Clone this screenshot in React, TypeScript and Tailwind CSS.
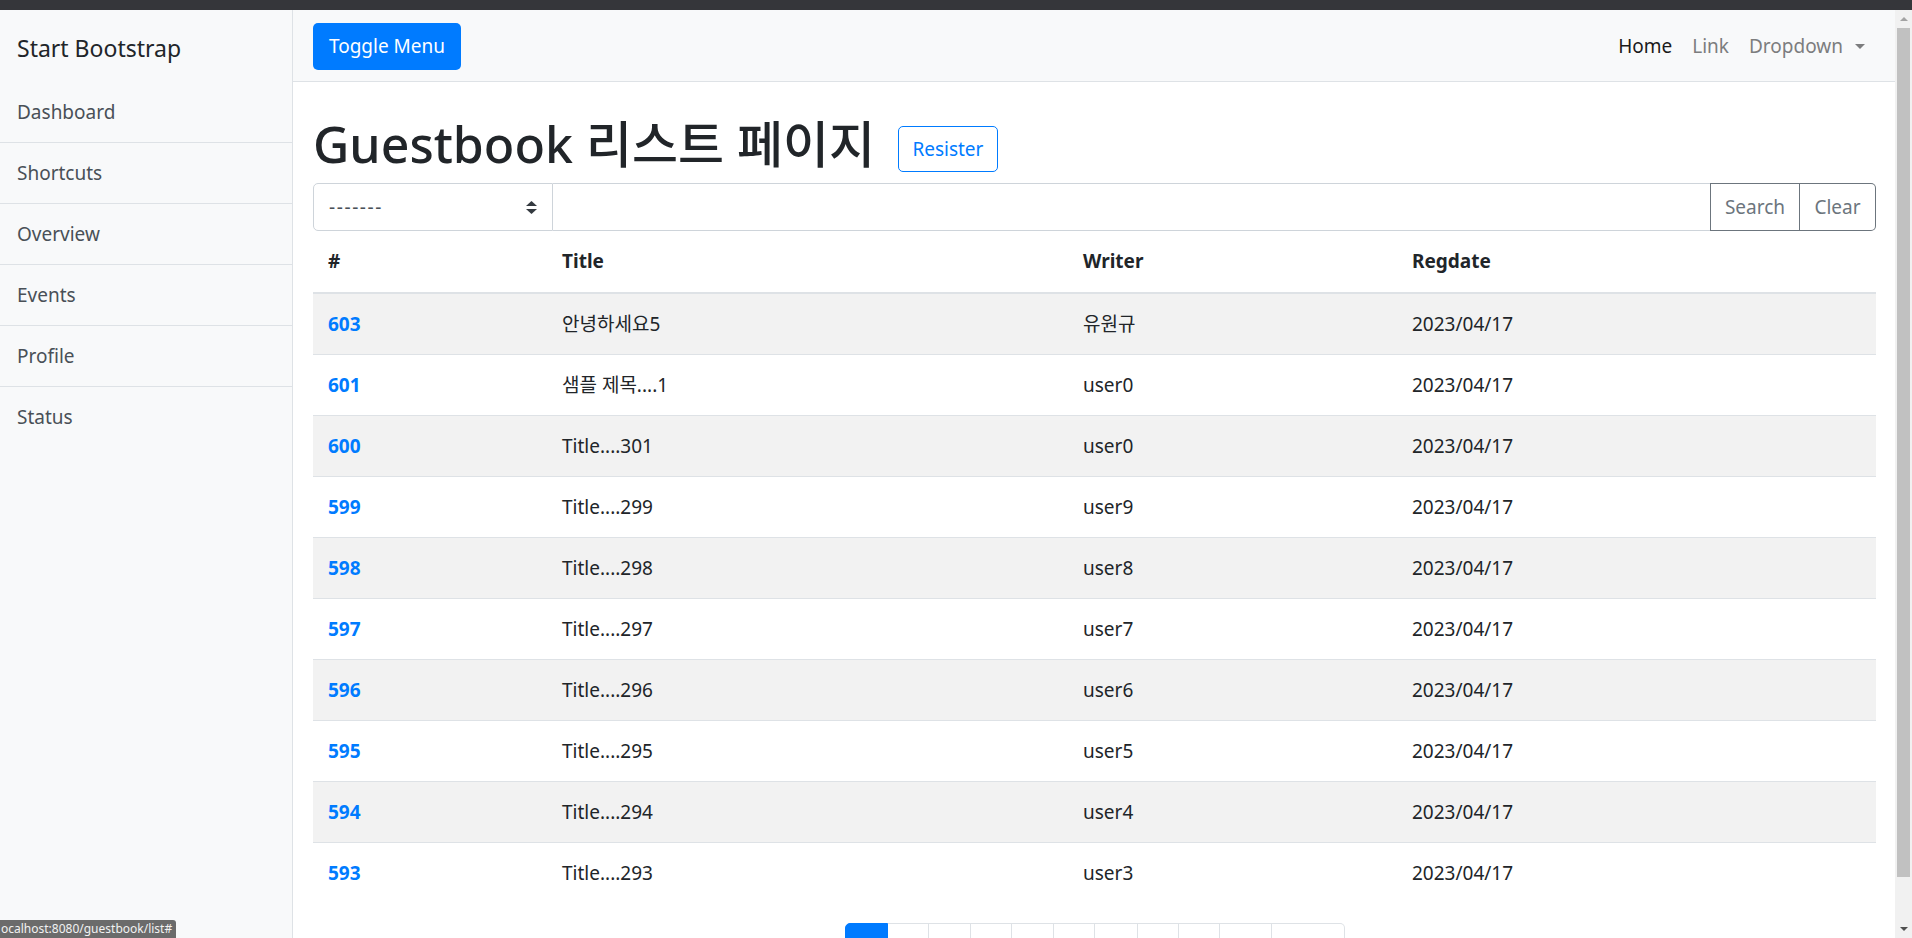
import React from 'react';

const rows = [
  { id: 603, title: '안녕하세요5', writer: '유원규' },
  { id: 601, title: '샘플 제목....1', writer: 'user0' },
  { id: 600, title: 'Title....301', writer: 'user0' },
  { id: 599, title: 'Title....299', writer: 'user9' },
  { id: 598, title: 'Title....298', writer: 'user8' },
  { id: 597, title: 'Title....297', writer: 'user7' },
  { id: 596, title: 'Title....296', writer: 'user6' },
  { id: 595, title: 'Title....295', writer: 'user5' },
  { id: 594, title: 'Title....294', writer: 'user4' },
  { id: 593, title: 'Title....293', writer: 'user3' },
];

const menu = ['Dashboard', 'Shortcuts', 'Overview', 'Events', 'Profile', 'Status'];

const pages = [
  { label: '1', w: 'w-[43px]' },
  { label: '2', w: 'w-[41px]' },
  { label: '3', w: 'w-[42px]' },
  { label: '4', w: 'w-[41px]' },
  { label: '5', w: 'w-[42px]' },
  { label: '6', w: 'w-[41px]' },
  { label: '7', w: 'w-[43px]' },
  { label: '8', w: 'w-[41px]' },
  { label: '9', w: 'w-[41px]' },
  { label: '10', w: 'w-[52px]' },
  { label: 'Next', w: 'w-[73px]' },
];

function Sidebar() {
  return (
    <aside className="w-[293px] shrink-0 bg-[#f8f9fa] border-r border-[#dee2e6]">
      <div className="h-[72px] pl-[17px] pt-[4px] flex items-center text-[23px] text-[#212529]">
        Start Bootstrap
      </div>
      {menu.map((m, i) => (
        <div
          key={m}
          className={`h-[61px] pl-[17px] flex items-center text-[19px] text-[#495057] ${
            i < menu.length - 1 ? 'border-b border-[#dee2e6]' : ''
          }`}
        >
          {m}
        </div>
      ))}
    </aside>
  );
}

function Navbar() {
  return (
    <nav className="h-[72px] shrink-0 bg-[#f8f9fa] border-b border-[#dee2e6] pt-[13px] pl-[20px] pr-[20px] flex items-start justify-between">
      <button className="h-[47px] w-[148px] rounded-[5px] bg-[#007bff] text-white text-[19px]">
        Toggle Menu
      </button>
      <ul className="flex items-center h-[47px] text-[19px]">
        <li className="px-[10px] text-[#1a1a1a]">Home</li>
        <li className="px-[10px] text-[#7c7d7e]">Link</li>
        <li className="px-[10px] text-[#7c7d7e] flex items-center">
          Dropdown
          <svg width="10" height="5" viewBox="0 0 10 5" className="ml-[12px]">
            <polygon points="0,0 10,0 5,5" fill="#7c7d7e" />
          </svg>
        </li>
      </ul>
    </nav>
  );
}

function SearchBar() {
  return (
    <div className="mt-[9px] h-[48px] flex">
      <div className="w-[240px] shrink-0 border border-[#ced4da] rounded-l-[5px] bg-white pl-[15px] pr-[15px] flex items-center justify-between text-[19px] text-[#495057]">
        <span className="tracking-[1.6px]">-------</span>
        <svg width="11" height="13" viewBox="0 0 11 13">
          <polygon points="0,5 5.5,0 11,5" fill="#343a40" />
          <polygon points="0,8 5.5,13 11,8" fill="#343a40" />
        </svg>
      </div>
      <div className="flex-1 border-y border-[#ced4da] bg-white" />
      <button className="w-[90px] shrink-0 border border-[#6c757d] text-[#6c757d] text-[19px]">Search</button>
      <button className="w-[76px] shrink-0 border border-l-0 border-[#6c757d] rounded-r-[5px] text-[#6c757d] text-[19px]">
        Clear
      </button>
    </div>
  );
}

function Table() {
  return (
    <div className="text-[19px] text-[#212529]">
      <div className="grid grid-cols-[234px_521px_329px_1fr] h-[63px] border-b-2 border-[#dee2e6] font-bold items-center">
        <div className="px-[15px]">#</div>
        <div className="px-[15px]">Title</div>
        <div className="px-[15px]">Writer</div>
        <div className="px-[15px]">Regdate</div>
      </div>
      {rows.map((r, i) => (
        <div
          key={r.id}
          className={`grid grid-cols-[234px_521px_329px_1fr] h-[61px] items-center ${
            i % 2 === 0 ? 'bg-[#f2f2f2]' : 'bg-white'
          } ${i < rows.length - 1 ? 'border-b border-[#dee2e6]' : ''}`}
        >
          <div className="px-[15px] font-bold text-[#007bff]">{r.id}</div>
          <div className="px-[15px]">{r.title}</div>
          <div className="px-[15px]">{r.writer}</div>
          <div className="px-[15px]">2023/04/17</div>
        </div>
      ))}
    </div>
  );
}

function Pagination() {
  return (
    <div className="mt-[19px] flex justify-center">
      <ul className="flex text-[19px]">
        {pages.map((p, i) => (
          <li
            key={p.label}
            className={`${p.w} h-[50px] flex items-center justify-center border ${
              i === 0
                ? 'bg-[#007bff] border-[#007bff] text-white rounded-l-[5px]'
                : 'border-l-0 border-[#dee2e6] text-[#007bff] bg-white'
            } ${i === pages.length - 1 ? 'rounded-r-[5px]' : ''}`}
          >
            {p.label}
          </li>
        ))}
      </ul>
    </div>
  );
}

function Scrollbar() {
  return (
    <div className="w-[17px] shrink-0 bg-[#f1f1f1] flex flex-col items-center">
      <div className="h-[18px] flex items-center justify-center">
        <svg width="8" height="4" viewBox="0 0 8 4">
          <polygon points="0,4 4,0 8,4" fill="#a3a3a3" />
        </svg>
      </div>
      <div className="w-[13px] h-[849px] bg-[#c1c1c1]" />
      <div className="flex-1" />
      <div className="h-[18px] flex items-center justify-center">
        <svg width="8" height="4" viewBox="0 0 8 4">
          <polygon points="0,0 8,0 4,4" fill="#505050" />
        </svg>
      </div>
    </div>
  );
}

export default function App() {
  return (
    <div className="w-[1912px] h-[938px] overflow-hidden flex flex-col bg-white font-['Noto_Sans','Noto_Sans_CJK_KR',sans-serif] leading-[1.5]">
      <div className="h-[10px] shrink-0 bg-[#35363a]" />
      <div className="relative flex flex-1 min-h-0">
        <div className="flex flex-1 min-w-0 overflow-hidden">
          <Sidebar />
          <div className="flex-1 min-w-0 flex flex-col">
            <Navbar />
            <main className="pl-[20px] pr-[19px] pt-[32px]">
              <div className="flex items-end h-[60px]">
                <h1 className="text-[50px] leading-[60px] font-medium text-[#212529]">Guestbook 리스트 페이지</h1>
                <button className="ml-[23px] mb-[2px] h-[46px] w-[100px] border border-[#007bff] rounded-[5px] text-[#007bff] text-[19px]">
                  Resister
                </button>
              </div>
              <SearchBar />
              <Table />
              <Pagination />
            </main>
          </div>
        </div>
        <Scrollbar />
        <div className="absolute left-0 bottom-0 h-[18px] pl-[1px] pr-[4px] bg-[#6b6b6b] rounded-tr-[3px] text-[12px] leading-[18px] text-[#f2f2f2]">
          ocalhost:8080/guestbook/list#
        </div>
      </div>
    </div>
  );
}
